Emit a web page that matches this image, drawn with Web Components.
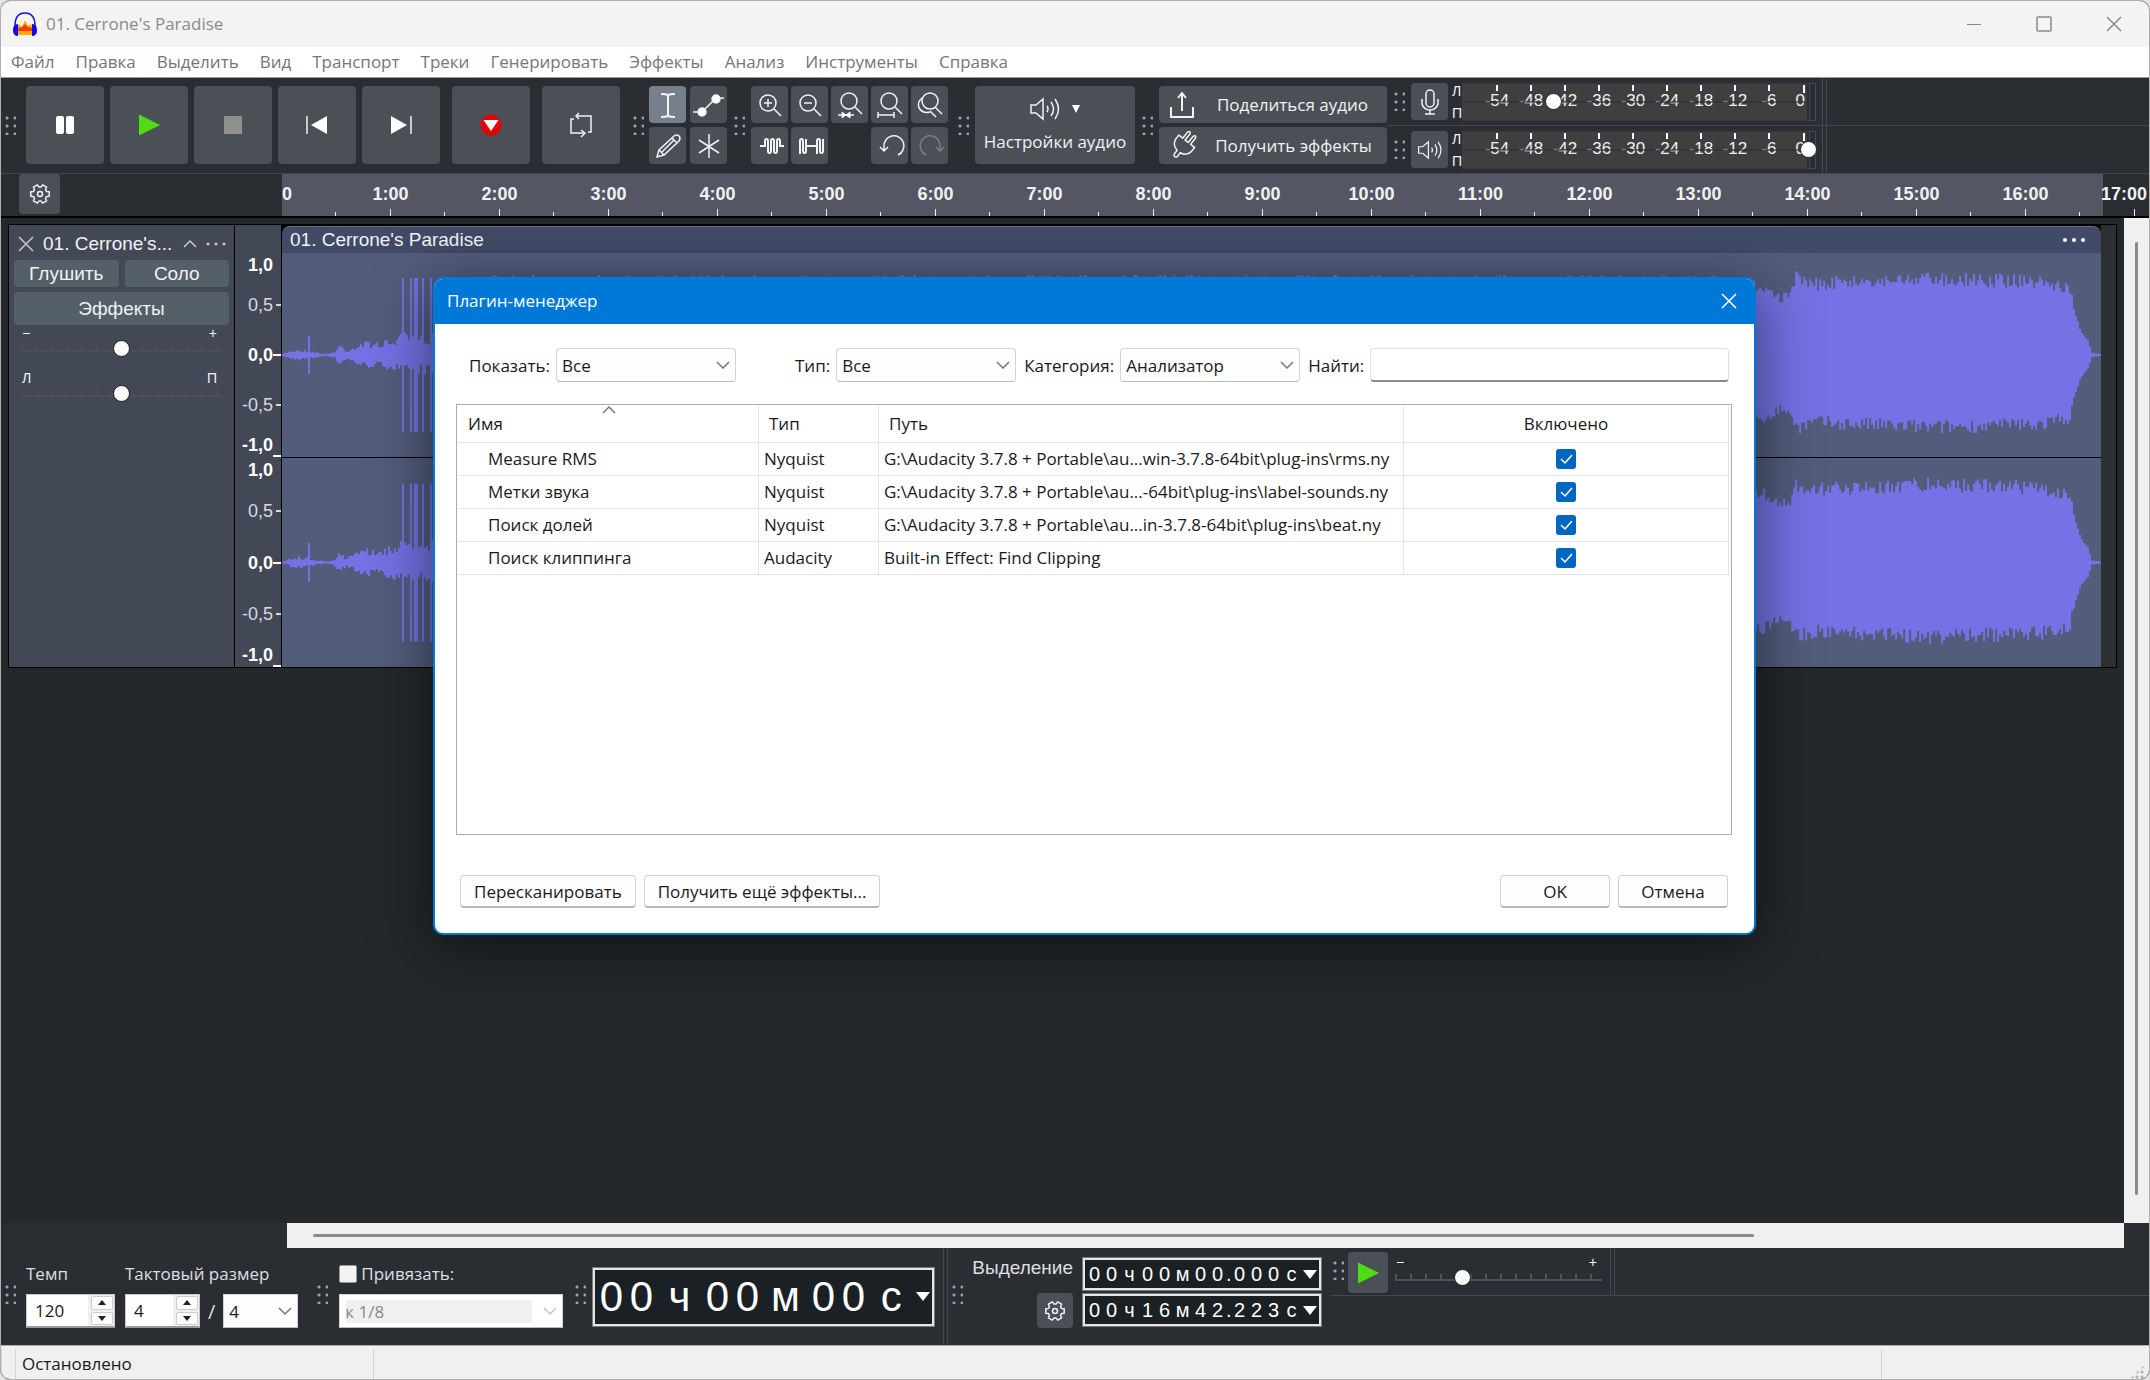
<!DOCTYPE html>
<html lang="ru">
<head>
<meta charset="utf-8">
<title>01. Cerrone's Paradise</title>
<style>
  body {
    margin: 0;
    background: #e4e4e4;
    font-family: "Open Sans", "Noto Sans", sans-serif;
    font-size: 17px;
    --sans: "Liberation Sans", Arial, sans-serif;
    --bar: #2a2e32;
    --btn: #4a5056;
    --line: #42464d;
    --ink: #f0f2f4;
  }
</style>
</head>
<body>
<audio-app></audio-app>

<script>
const define = (name, html, setup) => {
  const template = document.createElement("template")
  template.innerHTML = html
  customElements.define(name, class extends HTMLElement {
    constructor() {
      super()
      this.attachShadow({ mode: "open" })
      this.shadowRoot.appendChild(template.content.cloneNode(true))
    }
    connectedCallback() {
      if (setup) setup(this, this.shadowRoot, (n, d = "") => this.getAttribute(n) ?? d)
    }
  })
}

// six rounded teeth around a small hub
const gearPath = () => {
  const pts = []
  for (let i = 0; i < 6; i++) {
    for (const [off, r] of [[-22, 7], [-14, 9.5], [14, 9.5], [22, 7]]) {
      const a = (i * 60 + off) * Math.PI / 180
      pts.push((12 + r * Math.cos(a)).toFixed(1) + " " + (12 + r * Math.sin(a)).toFixed(1))
    }
  }
  return "M" + pts.join("L") + "Z"
}

const SPEAKER = '<path d="M2 9h5l7-6v20l-7-6H2z"/><path d="M18 10q2 3 0 6M22 6q5 7 0 14M26 3q7 10 0 20"/>'

// name: [width, height, content]
const ICONS = {
  pause: [22, 22, '<g fill="#fff" stroke="none"><rect x="2" y="2" width="8" height="18" rx="2"/><rect x="12" y="2" width="8" height="18" rx="2"/></g>'],
  play: [24, 24, '<path d="M2 1.500L23 12 2 22.500z" fill="#50dc14" stroke="none"/>'],
  stop: [20, 20, '<path d="M1 1h18v18H1z" fill="#8f8f8f" stroke="none"/>'],
  start: [24, 20, '<path d="M22 1v18L6 10z" fill="#fff" stroke="none"/><path d="M2 1v18"/>'],
  end: [24, 20, '<path d="M2 1v18l16-9z" fill="#fff" stroke="none"/><path d="M22 1v18"/>'],
  record: [24, 24, '<circle cx="12" cy="12" r="10.500" fill="#e60000" stroke="none"/><path d="M4.500 7h15L12 18z" fill="#fff" stroke="none"/>'],
  loop: [24, 26, '<path d="M5 7H2v14h13M7 4h15v16h-3"/><path d="M10 1L7 4l3 3M12 18l4 3-4 4"/>'],
  ibeam: [38, 38, '<path d="M12 8q5 0 7 1 2-1 7-1M19 9v21M12 31q5 0 7-1 2 1 7 1" stroke-width="2"/>'],
  envelope: [38, 38, '<path d="M3 26h9L26 12h8"/><circle cx="12" cy="26" r="4" fill="#fff"/><circle cx="26" cy="13" r="4" fill="#fff"/>'],
  pencil: [38, 38, '<path d="M8 30l2-7L25 9q3-2 5 0t0 5L15 28zM10 23l5 5M23 11l5 5M12 26L25 13"/>'],
  multi: [38, 38, '<path d="M19 7v24M9 13l20 13M29 13L9 26"/>'],
  zoomin: [38, 38, '<circle cx="17" cy="17" r="8"/><path d="M23 23l7 7M13 17h8M17 13v8"/>'],
  zoomout: [38, 38, '<circle cx="17" cy="17" r="8"/><path d="M23 23l7 7M13 17h8"/>'],
  zoomsel: [38, 38, '<circle cx="18" cy="15" r="8"/><path d="M24 21l7 7M7 29h16"/><path d="M11 26v6l4-3zM19 26v6l-4-3z" fill="#fff" stroke-width="1"/>'],
  zoomfit: [38, 38, '<circle cx="18" cy="15" r="8"/><path d="M24 21l7 7M7 29h16M7 26v6M23 26v6"/>'],
  zoomtog: [38, 38, '<circle cx="19" cy="15" r="8"/><path d="M24 21l7 7M11 12q-5 4-3 10 4 6 11 4M19 25l6 6"/>'],
  trim: [38, 38, '<path d="M9 19h5V14q0-2 1.500-2T17 14v10q0 2 1.500 2T20 24V14q0-2 1.500-2T23 14v10q0 2 1.500 2T26 24V14q0-2 1.500-2T29 14v5h4" stroke-width="2"/>'],
  silence: [38, 38, '<path d="M9 27V14q0-2 1.500-2T12 14v10q0 2 1.500 2T15 24V12M15 19h11M26 27V14q0-2 1.500-2T29 14v10q0 2 1.500 2T32 24V12" stroke-width="2"/>'],
  undo: [38, 38, '<path d="M13 23v-3a10 10 0 1 1 14 8M9 20l4 4 4-4"/>'],
  redo: [38, 38, '<path d="M29 23v-3a10 10 0 1 0-14 8M33 20l-4 4-4-4"/>'],
  speaker: [32, 26, SPEAKER],
  speakersm: [26, 22, SPEAKER, "0 0 32 26"],
  caret: [10, 10, '<path d="M1 1h8L5 9z" fill="#fff" stroke="none"/>'],
  share: [28, 28, '<path d="M3 16v10h22V16M14 20V3M10 7l4-5 4 5" stroke-width="2"/>'],
  plug: [30, 30, '<g transform="rotate(38 15 15)" stroke-linejoin="round"><path d="M5 9h5V1q1.500-3 3 0v8h4V1q1.500-3 3 0v8h5v5q-1 7-8 8v5q-2 3-4 0v-5q-7-1-8-8z"/></g>'],
  mic: [20, 28, '<rect x="6" y="2" width="8" height="17" rx="4"/><path d="M2 11v5q2 6 8 6t8-6v-5M10 22v4M5 26h10"/>'],
  gear: [24, 24, '<path d="' + gearPath() + '" stroke-linejoin="round"/><circle cx="12" cy="12" r="2.500"/>'],
  close: [16, 16, '<path d="M1 1l14 14M15 1L1 15"/>'],
  minimize: [16, 16, '<path d="M1 8.500h14" stroke-width="1"/>'],
  maximize: [16, 16, '<rect x="1" y="1" width="14" height="14" rx="1"/>'],
  up: [14, 8, '<path d="M1 7l6-6 6 6"/>'],
  down: [14, 8, '<path d="M1 1l6 6 6-6"/>'],
  dots: [20, 4, '<g fill="currentColor" stroke="none"><circle cx="2" cy="2" r="1.500"/><circle cx="10" cy="2" r="1.500"/><circle cx="18" cy="2" r="1.500"/></g>'],
  bigdots: [24, 6, '<g fill="#fff" stroke="none"><circle cx="3" cy="3" r="2"/><circle cx="12" cy="3" r="2"/><circle cx="21" cy="3" r="2"/></g>'],
  tick: [20, 20, '<path d="M5 10l4 4 7-8"/>'],
  logo: [26, 26, '<path d="M6 24q-1-9 1-11l3 3 3-7 3 6 3-2q2 3 1 11z" fill="#ffb000" stroke="none"/><path d="M6 17l4-1 3-3 3 3 4 1v3H6z" fill="#ff3c00" stroke="none"/><path d="M3 15Q3 2 13 2t10 13" stroke="#1414dc" stroke-width="1.500"/><path d="M6 13v12q-5 0-5-6t5-6zM20 13v12q5 0 5-6t-5-6z" fill="#0a0af0" stroke="none"/>']
}

define("app-icon", `
<style>
  :host { display: inline-flex; flex: none; }
  svg { display: block; fill: none; stroke: currentColor; stroke-width: 1.5; }
</style>
<svg aria-hidden="true"></svg>
`, (el, root, attr) => {
  const [w, h, body, box] = ICONS[attr("name")]
  const svg = root.querySelector("svg")
  svg.setAttribute("width", w)
  svg.setAttribute("height", h)
  svg.setAttribute("viewBox", box || `0 0 ${w} ${h}`)
  svg.innerHTML = body
})

define("grip-handle", `
<style>
  :host {
    display: block; flex: none; align-self: center; width: 11px; height: 19px; margin: 0 6px 0 7px;
    background: radial-gradient(circle at 2px 2px, #9a9ead 1px, transparent 2px) 0 0 / 8px 8px;
  }
</style>
`)

define("tool-button", `
<style>
  :host { display: block; flex: none; }
  button {
    display: flex; align-items: center; justify-content: center; gap: 8px; box-sizing: border-box;
    width: 100%; height: 100%; padding: 0; border: 0; border-radius: 4px;
    background: var(--btn); color: var(--ink); font: inherit;
  }
  :host([active]) button { background: #75808c; }
  :host([dim]) button { color: #7a7e82; }
</style>
<button type="button"><slot></slot></button>
`, (el, root, attr) => {
  const icon = attr("icon")
  if (icon) {
    root.querySelector("button").innerHTML = `<app-icon name="${icon}"></app-icon>`
    root.querySelector("button").setAttribute("aria-label", icon)
  }
})

define("title-bar", `
<style>
  :host { display: flex; align-items: center; height: 46px; padding: 0 12px 0 11px; background: #f3f3f3; color: #8a8a8a; }
  h1 { flex: 1; margin: 0 0 0 8px; font-size: 17px; line-height: 24px; padding-bottom: 1px; font-weight: 400; }
  button { display: flex; justify-content: center; width: 70px; padding: 0; border: 0; background: none; color: #8a8a8a; }
  button:last-child { margin-right: -12px; }
</style>
<app-icon name="logo"></app-icon>
<h1><slot></slot></h1>
<button aria-label="minimize"><app-icon name="minimize"></app-icon></button>
<button aria-label="maximize"><app-icon name="maximize"></app-icon></button>
<button aria-label="close"><app-icon name="close"></app-icon></button>
`)

define("menu-bar", `
<style>
  :host { display: block; background: #fff; border-bottom: 1px solid #999; }
  nav { display: flex; gap: 21px; height: 30px; padding: 0 10px; }
  a { color: #767676; line-height: 29px; text-decoration: none; }
</style>
<nav></nav>
`, (el, root, attr) => {
  root.querySelector("nav").innerHTML = attr("items").split(",").map(t => `<a href="#">${t}</a>`).join("")
})

define("level-meter", `
<style>
  :host { display: flex; align-items: center; gap: 4px; font: 17px/20px var(--sans); color: var(--ink); }
  tool-button { width: 37px; height: 37px; }
  .sides { display: grid; gap: 6px; width: 9px; margin-right: -3px; font-size: 14px; line-height: 16px; }
  .meter { position: relative; z-index: 1; display: grid; width: 345px; height: 38px; background: #3f3f3f; }
  .scale { grid-area: 1 / 1; display: flex; padding-left: 18px; border: solid #35393d; border-width: 1px 0; }
  .scale span {
    width: 34px; padding-top: 7px; text-align: center;
    background: linear-gradient(#fff, #fff) center 1px / 2px 6px no-repeat;
  }
  .scale span:last-child { width: 19px; text-align: right; background-position: right 1px; background-size: 2px 8px; }
  input {
    grid-area: 1 / 1; align-self: center; appearance: none; width: 363px; height: 20px; margin: 0 -8px;
    background: linear-gradient(#2a2e3299, #2a2e3299) center / calc(100% - 18px) 2px no-repeat;
  }
  input::-webkit-slider-thumb {
    appearance: none; width: 17px; height: 17px; border: 1px solid #222; border-radius: 50%; background: #fff;
  }
  .peak { box-sizing: border-box; width: 7px; height: 38px; margin-left: -2px; border: 1px solid #464a50; }
</style>
<tool-button></tool-button>
<div class="sides"><span>Л</span><span>П</span></div>
<div class="meter">
  <div class="scale"></div>
  <input type="range" min="0" max="345" aria-label="level">
</div>
<div class="peak"></div>
`, (el, root, attr) => {
  root.querySelector("tool-button").innerHTML = `<app-icon name="${attr("icon")}"></app-icon>`
  root.querySelector(".scale").innerHTML =
    [-54, -48, -42, -36, -30, -24, -18, -12, -6, 0].map(n => `<span>${n}</span>`).join("")
  root.querySelector("input").value = attr("value")
})

define("tick-slider", `
<style>
  :host { display: block; color: var(--ink); font: 14px/12px var(--sans); }
  .ends { display: flex; justify-content: space-between; padding: 0 5px 0 1px; }
  input {
    display: block; appearance: none; box-sizing: border-box; width: 100%; height: 18px; margin: 0;
    background:
      linear-gradient(var(--tick), var(--tick)) 0 11px / 100% 2px no-repeat,
      repeating-linear-gradient(to right, var(--tick) 0 2px, transparent 2px 15px) 0 6px / 100% 6px no-repeat;
  }
  input::-webkit-slider-thumb {
    appearance: none; width: 17px; height: 17px; border: 1px solid #15171a; border-radius: 50%; background: #fafafa;
  }
</style>
<div class="ends"><span></span><span></span></div>
<input type="range" min="0" max="100">
`, (el, root, attr) => {
  const [a, b] = root.querySelectorAll("span")
  a.textContent = attr("low")
  b.textContent = attr("high")
  const input = root.querySelector("input")
  input.value = attr("value", "50")
  input.setAttribute("aria-label", attr("low") + attr("high"))
})

define("main-toolbar", `
<style>
  :host { display: flex; height: 95px; background: var(--bar); border-bottom: 1px solid var(--line); color: var(--ink); }
  .group { display: flex; flex: none; margin: 8px 0 9px; }
  .transport { gap: 6px; }
  .transport tool-button { width: 78px; }
  .transport .wide { margin-left: 6px; }
  .cells { display: grid; grid-template-rows: 37px 37px; gap: 4px; }
  .edit { grid-template-columns: 37px 37px; }
  .zoom { grid-template-columns: repeat(5, 37px); column-gap: 3px; margin-right: 3px; }
  .skip { grid-column: 4; }
  .first { margin-left: 4px; margin-right: 10px; }
  .second { margin-left: 13px; margin-right: 5px; }
  .audio { width: 160px; }
  .audio .stack { display: grid; gap: 8px; justify-items: center; line-height: 24px; }
  .audio .top { display: flex; align-items: center; gap: 10px; }
  .share { display: grid; grid-template-rows: 37px 37px; gap: 4px; width: 228px; }
  .share span { flex: 1; margin-right: 6px; text-align: center; }
  .share app-icon { margin-left: 9px; }
  .meters { flex: 1; display: grid; grid-template-rows: 48px 1fr; min-width: 0; }
  .row { display: flex; align-items: center; }
  .row:first-child { border-bottom: 1px solid var(--line); }
  .end { align-self: stretch; width: 3px; margin-left: 6px; border: solid var(--line); border-width: 0 1px; }
</style>
<grip-handle class="first"></grip-handle>
<div class="group transport">
  <tool-button icon="pause"></tool-button>
  <tool-button icon="play"></tool-button>
  <tool-button icon="stop"></tool-button>
  <tool-button icon="start"></tool-button>
  <tool-button icon="end"></tool-button>
  <tool-button icon="record" class="wide"></tool-button>
  <tool-button icon="loop" class="wide"></tool-button>
</div>
<grip-handle class="second"></grip-handle>
<div class="group cells edit">
  <tool-button icon="ibeam" active></tool-button>
  <tool-button icon="envelope"></tool-button>
  <tool-button icon="pencil"></tool-button>
  <tool-button icon="multi"></tool-button>
</div>
<grip-handle></grip-handle>
<div class="group cells zoom">
  <tool-button icon="zoomin"></tool-button>
  <tool-button icon="zoomout"></tool-button>
  <tool-button icon="zoomsel"></tool-button>
  <tool-button icon="zoomfit"></tool-button>
  <tool-button icon="zoomtog"></tool-button>
  <tool-button icon="trim"></tool-button>
  <tool-button icon="silence"></tool-button>
  <tool-button icon="undo" class="skip"></tool-button>
  <tool-button icon="redo" dim></tool-button>
</div>
<grip-handle></grip-handle>
<div class="group">
  <tool-button class="audio"><span class="stack">
    <span class="top"><app-icon name="speaker"></app-icon><app-icon name="caret"></app-icon></span>
    <span>Настройки аудио</span>
  </span></tool-button>
</div>
<grip-handle></grip-handle>
<div class="group share">
  <tool-button><app-icon name="share"></app-icon><span>Поделиться аудио</span></tool-button>
  <tool-button><app-icon name="plug"></app-icon><span>Получить эффекты</span></tool-button>
</div>
<div class="meters">
  <div class="row"><grip-handle></grip-handle><level-meter icon="mic" value="91"></level-meter><div class="end"></div></div>
  <div class="row"><grip-handle></grip-handle><level-meter icon="speakersm" value="345"></level-meter><div class="end"></div></div>
</div>
`)

define("time-ruler", `
<style>
  :host { display: flex; height: 42px; background: var(--bar); border-bottom: 2px solid #000; }
  .left { flex: none; width: 281px; }
  tool-button { width: 41px; height: 40px; margin-left: 18px; }
  .scale {
    flex: 1; display: flex; min-width: 0; overflow: hidden;
    color: var(--ink); font: bold 18px/40px var(--sans);
    background:
      repeating-linear-gradient(to right, transparent 0 108px, #eee 108px 109px) 0 35px / 100% 7px no-repeat,
      repeating-linear-gradient(to right, transparent 0 54px, #eee 54px 55px, transparent 55px 109px) -1px 38px / 100% 4px no-repeat,
      linear-gradient(to right, #545763 calc(100% - 46px), transparent 0);
  }
  span { flex: none; width: 109px; text-align: center; }
  span:first-child { width: 54px; text-align: left; }
  span:last-child { flex: 1; width: auto; text-align: right; padding-right: 2px; }
</style>
<div class="left"><tool-button icon="gear"></tool-button></div>
<div class="scale"></div>
`, (el, root) => {
  const labels = ["0"]
  for (let m = 1; m <= 17; m++) labels.push(m + ":00")
  root.querySelector(".scale").innerHTML = labels.map(t => `<span>${t}</span>`).join("")
})

define("track-panel", `
<style>
  :host { display: block; padding: 0 5px; background: #434856; color: var(--ink); font: 19px/24px var(--sans); }
  header { display: flex; align-items: center; gap: 9px; height: 35px; padding: 3px 3px 0 4px; box-sizing: border-box; color: #c4c8d0; }
  header span { flex: 1; color: var(--ink); white-space: nowrap; }
  .row { display: grid; grid-template-columns: 1fr 1fr; gap: 5px 6px; }
  tool-button { --btn: #555f67; height: 27px; }
  .wide { grid-column: 1 / 3; height: 33px; }
  tick-slider { --tick: #4b5054; margin: 2px 7px 0; }
  tick-slider + tick-slider { margin-top: 15px; }
</style>
<header>
  <app-icon name="close"></app-icon><span>01. Cerrone's...</span>
  <app-icon name="up"></app-icon><app-icon name="dots"></app-icon>
</header>
<div class="row">
  <tool-button>Глушить</tool-button>
  <tool-button>Соло</tool-button>
  <tool-button class="wide">Эффекты</tool-button>
</div>
<tick-slider low="−" high="+"></tick-slider>
<tick-slider low="Л" high="П"></tick-slider>
`)

define("amp-scale", `
<style>
  :host { display: grid; grid-template-rows: 204px 1fr; gap: 1px; padding-top: 28px; background: #434856; color: #d7dae0; font: 18px/20px var(--sans); }
  div { display: flex; flex-direction: column; }
  span { display: flex; flex: 56; align-items: center; justify-content: flex-end; gap: 3px; }
  span::after { content: ""; width: 5px; height: 2px; background: currentColor; }
  .edge { flex: 24; font-weight: bold; color: #fff; }
  .edge::after { height: 0; }
  .edge:last-child::after { height: 2px; align-self: flex-end; width: 8px; margin-left: -3px; }
  .zero { flex: 44; font-weight: bold; color: #fff; }
  .zero::after { width: 8px; margin-left: -3px; }
</style>
`, (el, root) => {
  for (let i = 0; i < 2; i++) {
    const div = document.createElement("div")
    div.innerHTML = `<span class="edge">1,0</span><span>0,5</span><span class="zero">0,0</span><span>-0,5</span><span class="edge">-1,0</span>`
    root.appendChild(div)
  }
})

// [x, level] pairs, x in clip units, level 0..1 of half the channel height
const LEVELS = [
  [0, .01], [8, .05], [16, .06], [26, .05], [34, .03], [44, .01], [52, .04], [57, .12], [63, .05], [80, .14],
  [100, .14], [115, .19], [120, .23], [135, .2], [150, .22], [151, .7], [195, .7], [205, .8], [1430, .8],
  [1480, .76], [1485, .7], [1498, .63], [1508, .65],
  [1513, .84], [1535, .78], [1650, .84], [1760, .8], [1788, .72], [1792, .48], [1799, .24], [1806, .15], [1810, .02], [1820, .01]
]
const SPIKES = [26, 120, 128, 132, 134, 140, 148]

define("wave-form", `
<style>
  :host { display: block; min-height: 0; background: #525d7c; }
  svg { display: block; width: 100%; height: 100%; }
</style>
<svg viewBox="0 -102 1820 204" preserveAspectRatio="none" aria-hidden="true"></svg>
`, (el, root, attr) => {
  let seed = Number(attr("seed", "1"))
  const rand = () => (seed = (seed * 16807) % 2147483647) / 2147483647
  const level = x => {
    let i = 1
    while (i < LEVELS.length - 1 && LEVELS[i][0] < x) i++
    const [x0, a] = LEVELS[i - 1], [x1, b] = LEVELS[i]
    return a + (b - a) * (x - x0) / (x1 - x0)
  }
  let d = ""
  for (let x = 0; x < 1820; x += 2) {
    const base = level(x) * 102
    const rough = x < 150 ? .5 : x > 1790 ? .06 : .17
    let top = base * (.98 - rand() * rough)
    let low = base * (.93 - rand() * rough)
    if (SPIKES.includes(x)) top = low = x < 60 ? 19 : 77
    d += `M${x} ${-Math.max(top, 1).toFixed(1)}h2V${Math.max(low, 1).toFixed(1)}h-2z`
  }
  root.querySelector("svg").innerHTML = `<path d="${d}" fill="#7472e4"/>`
})

define("track-clip", `
<style>
  :host { display: grid; grid-template-rows: 27px 204px 1fr; gap: 1px; padding-right: 15px; background: linear-gradient(to right, #000 calc(100% - 15px), #2c3033 0); }
  header {
    display: flex; align-items: center; justify-content: space-between; box-sizing: border-box;
    margin: 1px 0 -1px; padding: 0 15px 0 8px; border-top: 1px solid #666d84; border-radius: 8px 8px 0 0;
    background: #414a66; color: var(--ink); font: 19px/24px var(--sans);
  }
</style>
<header><slot></slot><app-icon name="bigdots"></app-icon></header>
<wave-form seed="7"></wave-form>
<wave-form seed="91"></wave-form>
`)

define("track-area", `
<style>
  :host { flex: 1; display: grid; grid-template-columns: 1fr 25px; min-height: 0; background: #24282b; }
  .track {
    display: grid; grid-template-columns: 225px 46px 1fr; gap: 1px; height: 442px;
    margin: 6px 7px 0 7px; border: 1px solid #000; background: #000;
  }
  .scroll { display: flex; justify-content: center; padding: 24px 0 28px; background: #f0f0f0; }
  .thumb { width: 3px; border-radius: 2px; background: #8a8a8a; }
</style>
<div class="track">
  <track-panel></track-panel>
  <amp-scale></amp-scale>
  <track-clip>01. Cerrone's Paradise</track-clip>
</div>
<div class="scroll"><div class="thumb"></div></div>
`)

define("time-field", `
<style>
  :host {
    display: flex; align-items: center; box-sizing: border-box; border: 3px solid #e6e6e6; outline: 1px solid #77797c; outline-offset: -1px;
    background: #1b2024; color: #fff; font: 20px/28px var(--sans); padding-left: 1px; --digit: 17px; --unit: 19px; --dot: 5px;
  }
  :host([big]) { font-size: 42px; line-height: 54px; --digit: 30px; --unit: 46px; }
  .time { white-space: nowrap; }
  span { display: inline-block; width: var(--digit); text-align: center; }
  .unit { width: var(--unit); }
  .dot { width: var(--dot); }
  button { flex: 1; display: flex; justify-content: center; min-width: 0; padding: 0; border: 0; background: none; }
  i { border: 7px solid transparent; border-top: 9px solid #fff; border-bottom: 0; }
</style>
<div class="time"></div>
<button type="button" aria-label="format"><i></i></button>
`, (el, root, attr) => {
  root.querySelector(".time").innerHTML = [...attr("value")].map(c =>
    `<span class="${c === "." ? "dot" : /\d/.test(c) ? "" : "unit"}">${c}</span>`).join("")
})

define("combo-box", `
<style>
  :host { display: block; }
  label { display: flex; align-items: center; gap: 6px; }
  .box { display: grid; align-items: center; width: var(--w, 180px); }
  select {
    grid-area: 1 / 1; appearance: none; box-sizing: border-box; height: 34px; padding: 0 5px; width: 100%;
    border: 1px solid #d2d2d2; border-bottom-color: #bbb; border-radius: 4px; background: #fdfdfd; color: #1a1a1a; font: inherit;
  }
  app-icon { grid-area: 1 / 1; justify-self: end; margin-right: 6px; color: #777; pointer-events: none; }
  :host([plain]) select { border-radius: 0; }
  :host([disabled]) select {
    color: #8a8a8a; opacity: 1;
    background: linear-gradient(#f0f0f0, #f0f0f0) 6px center / calc(100% - 36px) 23px no-repeat #fff;
  }
  :host([disabled]) app-icon { color: #c4c4c4; }
</style>
<label><span></span><span class="box"><select></select><app-icon name="down"></app-icon></span></label>
`, (el, root, attr) => {
  const span = root.querySelector("span")
  if (attr("label")) span.textContent = attr("label")
  else span.remove()
  const select = root.querySelector("select")
  select.innerHTML = `<option>${attr("value")}</option>`
  select.disabled = el.hasAttribute("disabled")
  select.setAttribute("aria-label", attr("label") || attr("value"))
})

define("spin-box", `
<style>
  :host { display: flex; box-sizing: border-box; height: 34px; border: 1px solid #c8c8c8; border-bottom: 2px solid #999; background: #f0f0f0; }
  input { flex: 1; width: 0; min-width: 0; box-sizing: border-box; padding: 0 8px; border: 0; background: #fff; color: #1a1a1a; font: inherit; }
  .steps { display: grid; flex: none; grid-template-rows: 1fr 1fr; gap: 2px; width: 22px; padding: 1px 1px 1px 3px; }
  button { display: flex; align-items: center; justify-content: center; padding: 0; border: 1px solid #ccc; border-radius: 2px; background: #fdfdfd; }
  i { border: 4px solid transparent; border-bottom: 5px solid #222; border-top: 0; }
  button + button i { border-bottom: 0; border-top: 5px solid #222; }
</style>
<input type="text">
<div class="steps"><button type="button" aria-label="up"><i></i></button><button type="button" aria-label="down"><i></i></button></div>
`, (el, root, attr) => {
  const input = root.querySelector("input")
  input.value = attr("value")
  input.setAttribute("aria-label", attr("label"))
})

define("bottom-toolbar", `
<style>
  :host { display: flex; box-sizing: border-box; height: 97px; background: var(--bar); color: #dcdfe2; }
  grip-handle { margin-bottom: 4px; }
  .first { margin-left: 4px; margin-right: 10px; }
  .block { display: grid; align-content: start; padding-top: 12px; row-gap: 7px; line-height: 27px; }
  .row { display: flex; align-items: center; gap: 8px; }
  .tempo { width: 89px; margin-right: 10px; }
  .meas { width: 75px; }
  .slash { font-size: 20px; }
  .beat { margin-left: 19px; margin-right: 11px; }
  .snap label { display: flex; align-items: center; gap: 4px; }
  .snap input { appearance: none; width: 18px; height: 18px; margin: 0; border: 1px solid #999; border-radius: 2px; background: #f3f3f3; }
  .big { width: 343px; height: 60px; align-self: center; }
  .after { margin-left: 12px; }
  .end { flex: none; width: 3px; margin-left: 8px; border: solid var(--line); border-width: 0 1px; }
  .tail { margin-left: 4px; margin-right: 9px; }
  .sel { display: grid; grid-template-columns: auto 240px; gap: 2px 9px; padding-top: 9px; align-content: start; justify-items: end; font: 19px/22px var(--sans); }
  .sel time-field { width: 240px; height: 34px; }
  .sel tool-button { width: 36px; height: 35px; }
  .speed { flex: 1; align-self: flex-start; display: flex; height: 48px; box-sizing: border-box; margin-left: 8px; border-bottom: 1px solid var(--line); }
  .speed grip-handle { margin: 13px 4px 0 3px; align-self: flex-start; }
  .speed tool-button { width: 40px; height: 41px; margin-top: 4px; }
  .speed tick-slider { --tick: #4d525c; width: 207px; margin: 8px 0 0 7px; }
</style>
<grip-handle class="first"></grip-handle>
<div class="block tempo"><span>Темп</span><spin-box value="120" label="Темп"></spin-box></div>
<div class="block"><span>Тактовый размер</span>
  <div class="row"><spin-box class="meas" value="4" label="Тактовый размер"></spin-box><span class="slash">/</span><combo-box plain value="4" style="--w: 75px"></combo-box></div>
</div>
<grip-handle class="beat"></grip-handle>
<div class="block snap"><label><input type="checkbox">Привязать:</label>
  <combo-box plain disabled value="к 1/8" style="--w: 224px"></combo-box></div>
<grip-handle class="after"></grip-handle>
<time-field class="big" big value="00ч00м00с"></time-field>
<div class="end"></div>
<grip-handle class="tail"></grip-handle>
<div class="sel">
  <span>Выделение</span><time-field value="00ч00м00.000с"></time-field>
  <tool-button icon="gear"></tool-button><time-field value="00ч16м42.223с"></time-field>
</div>
<div class="speed">
  <grip-handle></grip-handle>
  <tool-button icon="play"></tool-button>
  <tick-slider low="−" high="+" value="31"></tick-slider>
  <div class="end"></div>
</div>
`)

define("status-bar", `
<style>
  :host { display: grid; grid-template-columns: 14px 358px 1fr 268px; height: 34px; padding: 3px 0 2px; box-sizing: border-box; background: #f0f0f0; border-top: 1px solid #aaa; color: #1a1a1a; line-height: 30px; }
  span { padding-left: 6px; border-left: 1px solid #d4d4d4; }
  span:first-child { border: 0; }
  span:last-child { display: flex; align-items: flex-end; justify-content: flex-end; }
  i { width: 14px; height: 14px; margin-right: 5px; background: radial-gradient(circle at 2px 2px, #b4b4b4 1px, transparent 2px) 0 0 / 5px 5px; clip-path: polygon(100% 0, 100% 100%, 0 100%); }
</style>
<span></span><span><slot></slot></span><span></span><span><i></i></span>
`)

define("plugin-dialog", `
<style>
  :host {
    display: flex; flex-direction: column; box-sizing: border-box; border: 2px solid #0078d7; border-radius: 10px;
    overflow: hidden; background: #fff; color: #1a1a1a; box-shadow: 0 12px 60px rgba(0, 0, 0, .55);
  }
  header { display: flex; align-items: center; justify-content: space-between; flex: none; box-sizing: border-box; height: 45px; padding: 0 17px 2px 12px; background: #0078d7; color: #fff; }
  h2 { margin: 0; font-size: 17px; font-weight: 400; }
  header button { padding: 0; border: 0; background: none; color: inherit; display: flex; }
  .filters { display: flex; align-items: center; gap: 8px; padding: 24px 25px 22px 34px; }
  .filters combo-box:first-child { margin-right: 51px; }
  .filters label { flex: 1; display: flex; align-items: center; gap: 6px; }
  .filters input { flex: 1; min-width: 0; box-sizing: border-box; height: 34px; border: 1px solid #e0e0e0; border-bottom: 2px solid #8a8a8a; border-radius: 4px; }
  .list { flex: 1; margin: 0 22px 0 21px; padding: 1px 2px 0 1px; border: 1px solid #a9acb3; }
  table { width: 100%; table-layout: fixed; border-spacing: 0; line-height: 32px; }
  th { position: relative; height: 36px; padding: 0 10px; font-weight: 400; text-align: left; }
  td { height: 32px; padding: 0 5px; white-space: nowrap; }
  th, td { border: solid #e4e4e4; border-width: 0 1px 1px 0; }
  td:first-child { padding-left: 30px; }
  th:last-child, td:last-child { text-align: center; }
  th app-icon { position: absolute; top: 0; left: 50%; margin-left: -6px; color: #777; }
  .check { display: grid; justify-content: center; color: #fff; }
  .check input { grid-area: 1 / 1; appearance: none; width: 20px; height: 20px; margin: 0; border-radius: 3px; background: #0067c0; }
  .check app-icon { grid-area: 1 / 1; pointer-events: none; }
  footer { display: flex; gap: 8px; padding: 40px 26px 25px 25px; }
  footer button {
    height: 33px; padding: 0 13px; border: 1px solid #d0d0d0; border-bottom: 2px solid #b8b8b8; border-radius: 4px;
    background: #fdfdfd; color: #1a1a1a; font: inherit;
  }
  footer .short { width: 110px; }
  .push { margin-left: auto; }
</style>
<header><h2>Плагин-менеджер</h2><button aria-label="close"><app-icon name="close"></app-icon></button></header>
<div class="filters">
  <combo-box label="Показать:" value="Все"></combo-box>
  <combo-box label="Тип:" value="Все"></combo-box>
  <combo-box label="Категория:" value="Анализатор"></combo-box>
  <label>Найти:<input type="text"></label>
</div>
<div class="list">
  <table>
    <colgroup><col style="width: 301px"><col style="width: 120px"><col style="width: 525px"><col></colgroup>
    <thead><tr><th>Имя<app-icon name="up"></app-icon></th><th>Тип</th><th>Путь</th><th>Включено</th></tr></thead>
    <tbody></tbody>
  </table>
</div>
<footer>
  <button>Пересканировать</button><button>Получить ещё эффекты...</button>
  <button class="short push">OK</button><button class="short">Отмена</button>
</footer>
`, (el, root) => {
  const plugins = [
    ["Measure RMS", "Nyquist", "G:\\Audacity 3.7.8 + Portable\\au...win-3.7.8-64bit\\plug-ins\\rms.ny"],
    ["Метки звука", "Nyquist", "G:\\Audacity 3.7.8 + Portable\\au...-64bit\\plug-ins\\label-sounds.ny"],
    ["Поиск долей", "Nyquist", "G:\\Audacity 3.7.8 + Portable\\au...in-3.7.8-64bit\\plug-ins\\beat.ny"],
    ["Поиск клиппинга", "Audacity", "Built-in Effect: Find Clipping"]
  ]
  root.querySelector("tbody").innerHTML = plugins.map(p => `<tr>${p.map(t => `<td>${t}</td>`).join("")}
    <td><span class="check"><input type="checkbox" checked aria-label="${p[0]}"><app-icon name="tick"></app-icon></span></td></tr>`).join("")
})

define("audio-app", `
<style>
  :host {
    position: relative; display: flex; flex-direction: column; box-sizing: border-box; height: 100vh;
    border: 1px solid #b0b0b0; border-radius: 10px; overflow: hidden; background: var(--bar);
  }
  title-bar, menu-bar, main-toolbar, time-ruler, bottom-toolbar, status-bar { flex: none; }
  .scroll { display: flex; flex: none; height: 25px; padding: 0 25px 0 286px; background: var(--bar); }
  .scroll div { flex: 1; display: flex; align-items: center; background: #f0f0f0; padding: 0 370px 0 26px; }
  .scroll i { flex: 1; height: 3px; border-radius: 2px; background: #8a8a8a; }
  plugin-dialog { position: absolute; left: 432px; top: 276px; width: 1323px; height: 658px; }
</style>
<title-bar>01. Cerrone's Paradise</title-bar>
<menu-bar items="Файл,Правка,Выделить,Вид,Транспорт,Треки,Генерировать,Эффекты,Анализ,Инструменты,Справка"></menu-bar>
<main-toolbar></main-toolbar>
<time-ruler></time-ruler>
<track-area></track-area>
<div class="scroll"><div><i></i></div></div>
<bottom-toolbar></bottom-toolbar>
<status-bar>Остановлено</status-bar>
<plugin-dialog></plugin-dialog>
`)
</script>
</body>
</html>
